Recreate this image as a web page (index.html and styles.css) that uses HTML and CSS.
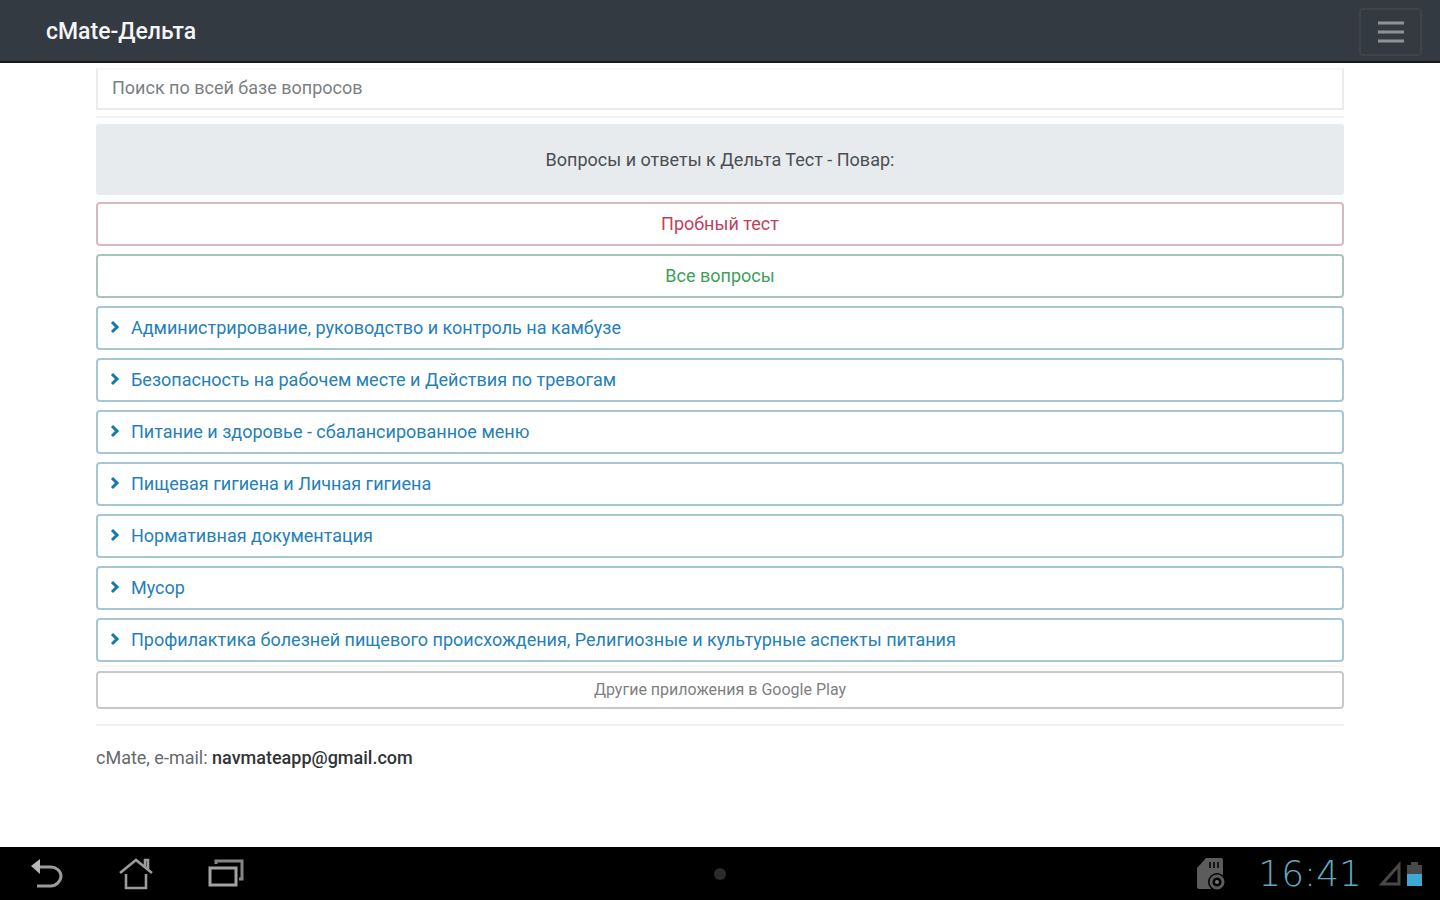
FILE: index.html
```html
<!DOCTYPE html>
<html lang="ru">
<head>
    <meta charset="UTF-8">
    <meta name="viewport" content="width=device-width, initial-scale=1.0">
    <title>cMate-Дельта</title>
    <link rel="stylesheet" href="styles.css">
</head>
<body>
    <header class="navbar">
        <a href="#" class="brand">cMate-Дельта</a>
        <button type="button" class="toggler" aria-label="Меню">
            <svg width="28" height="24" viewBox="0 0 28 24">
                <path d="M1 3h26M1 12h26M1 21h26" stroke="#8e9297" stroke-width="3"/>
            </svg>
        </button>
    </header>

    <main class="container">
        <input type="text" class="search" placeholder="Поиск по всей базе вопросов" aria-label="Поиск по всей базе вопросов">
        <hr>
        <div class="jumbotron">Вопросы и ответы к Дельта Тест - Повар:</div>

        <div class="buttons">
            <button type="button" class="btn btn-danger">Пробный тест</button>
            <button type="button" class="btn btn-success">Все вопросы</button>
            <button type="button" class="btn btn-topic"><svg class="chevron" viewBox="0 0 10 14"><path d="M2 2l5 5-5 5"/></svg>Администрирование, руководство и контроль на камбузе</button>
            <button type="button" class="btn btn-topic"><svg class="chevron" viewBox="0 0 10 14"><path d="M2 2l5 5-5 5"/></svg>Безопасность на рабочем месте и Действия по тревогам</button>
            <button type="button" class="btn btn-topic"><svg class="chevron" viewBox="0 0 10 14"><path d="M2 2l5 5-5 5"/></svg>Питание и здоровье - сбалансированное меню</button>
            <button type="button" class="btn btn-topic"><svg class="chevron" viewBox="0 0 10 14"><path d="M2 2l5 5-5 5"/></svg>Пищевая гигиена и Личная гигиена</button>
            <button type="button" class="btn btn-topic"><svg class="chevron" viewBox="0 0 10 14"><path d="M2 2l5 5-5 5"/></svg>Нормативная документация</button>
            <button type="button" class="btn btn-topic"><svg class="chevron" viewBox="0 0 10 14"><path d="M2 2l5 5-5 5"/></svg>Мусор</button>
            <button type="button" class="btn btn-topic"><svg class="chevron" viewBox="0 0 10 14"><path d="M2 2l5 5-5 5"/></svg>Профилактика болезней пищевого происхождения, Религиозные и культурные аспекты питания</button>
        </div>

        <hr class="hr-light">
        <button type="button" class="btn btn-secondary">Другие приложения в Google Play</button>
        <hr class="hr-footer">
        <footer>cMate, e-mail: <b>navmateapp@gmail.com</b></footer>
    </main>

    <!-- Android system bar -->
    <nav class="system-bar">
        <div class="system-keys">
            <button type="button" aria-label="Назад">
                <svg width="36" height="32" viewBox="0 0 36 32">
                    <path d="M10 9h13c5 0 10 4 10 9s-5 10-10 10H9" fill="none" stroke="#9b9b9b" stroke-width="3"/>
                    <path d="M12 1v15L3 8z" fill="#b8b8b8"/>
                </svg>
            </button>
            <button type="button" aria-label="Домой">
                <svg width="36" height="32" viewBox="0 0 36 32">
                    <path d="M2 15L18 2l16 13M27 9V2h3v9M8 16v14h20V16" fill="none" stroke="#9b9b9b" stroke-width="2.6"/>
                </svg>
            </button>
            <button type="button" aria-label="Недавние">
                <svg width="36" height="32" viewBox="0 0 36 32">
                    <path d="M2 10h26v17H2z" fill="none" stroke="#a2a2a2" stroke-width="3"/>
                    <path d="M8 6V3h26v18h-3" fill="none" stroke="#858585" stroke-width="3"/>
                </svg>
            </button>
        </div>
        <span class="dot"></span>
        <div class="status">
            <svg class="sd-card" width="30" height="34" viewBox="0 0 30 34">
                <path d="M10 1h15q2 0 2 2v28q0 1-2 1H3q-2 0-2-2V11z" fill="#5c5c5c"/>
                <path d="M14 5v6M18 5v6M22 5v6" stroke="#161616" stroke-width="2"/>
                <circle cx="21" cy="25" r="9" fill="#000"/>
                <circle cx="21" cy="25" r="6" fill="none" stroke="#5c5c5c" stroke-width="3"/>
                <circle cx="21" cy="25" r="2" fill="#777"/>
            </svg>
            <time>16:41</time>
            <svg width="46" height="28" viewBox="0 0 46 28">
                <path d="M4 24L21 5v19z" fill="none" stroke="#484848" stroke-width="3"/>
                <path d="M29 5h4V2h7v3h4v10H29z" fill="#494949"/>
                <path d="M29 14h15v12H29z" fill="#3ba9d3"/>
            </svg>
        </div>
    </nav>
</body>
</html>
```
FILE: styles.css
```css
* {
    box-sizing: border-box;
}
body {
    margin: 0;
    min-height: 100vh;
    display: flex;
    flex-direction: column;
    background-color: #fff;
    font-family: Roboto, sans-serif;
    font-size: 18px;
    color: #212529;
}
button {
    font-family: inherit;
    cursor: pointer;
}
.navbar {
    display: flex;
    align-items: center;
    justify-content: space-between;
    height: 63px;
    padding: 2px 18px 0 46px;
    background-color: #343a42;
    border-bottom: 2px solid #14181f;
}
.brand {
    color: #f4f5f6;
    font-size: 23px;
    font-weight: 500;
    text-decoration: none;
}
.toggler {
    display: flex;
    align-items: center;
    justify-content: center;
    width: 63px;
    height: 48px;
    padding: 0;
    background: none;
    border: 2px solid #3d4346;
    border-radius: 4px;
}
.container {
    flex: 1;
    width: 100%;
    padding: 5px 96px 0;
}
.search {
    display: block;
    width: 100%;
    height: 42px;
    padding: 0 14px 4px;
    border: 2px solid #ececec;
    border-top-color: #f7f7f7;
    font-family: inherit;
    font-size: 18px;
}
.search::placeholder {
    color: #7b7f83;
    opacity: 1;
}
hr {
    height: 2px;
    margin: 6px 0;
    border: 0;
    background-color: #f2f2f2;
}
.jumbotron {
    display: flex;
    align-items: center;
    justify-content: center;
    height: 71px;
    margin-bottom: 7px;
    background-color: #e7ebed;
    border-radius: 3px;
    color: #4b4f53;
}
.buttons {
    display: flex;
    flex-direction: column;
    gap: 8px;
}
.btn {
    width: 100%;
    height: 44px;
    padding: 0 12px 2px;
    background-color: #fff;
    border: 2px solid;
    border-radius: 4px;
    font-size: 18px;
}
.btn-danger {
    color: #c3405a;
    border-color: #d9b9c1;
}
.btn-success {
    color: #3d9f5a;
    border-color: #a9c5b8;
}
.btn-topic {
    display: flex;
    align-items: center;
    gap: 11px;
    color: #2580b8;
    border-color: #a3c8d3;
    text-align: left;
}
.chevron {
    width: 10px;
    height: 14px;
    fill: none;
    stroke: #1478b4;
    stroke-width: 3;
}
.hr-light {
    margin: 3px 0 4px;
    background-color: #f8f8f8;
}
.btn-secondary {
    display: block;
    height: 38px;
    color: #7d7f82;
    border-color: #c8c9cb;
    font-size: 16px;
}
.hr-footer {
    margin: 15px 0 20px;
}
footer {
    line-height: 24px;
    color: #66696c;
}
footer b {
    color: #303438;
    font-weight: 500;
}
.system-bar {
    display: grid;
    grid-template-columns: 1fr auto 1fr;
    align-items: center;
    height: 53px;
    padding: 0 16px;
    background-color: #000;
}
.system-keys {
    display: flex;
    gap: 54px;
    padding-left: 12px;
}
.system-keys button {
    display: flex;
    padding: 0;
    background: none;
    border: 0;
}
.dot {
    width: 12px;
    height: 12px;
    border-radius: 50%;
    background-color: #2b2b2b;
}
.status {
    display: flex;
    align-items: center;
    justify-content: flex-end;
}
.sd-card {
    margin-right: 32px;
}
time {
    margin-right: 16px;
    color: #62a8bd;
    font-family: "DejaVu Sans", sans-serif;
    font-size: 36px;
    font-weight: 200;
    line-height: 40px;
}
```
